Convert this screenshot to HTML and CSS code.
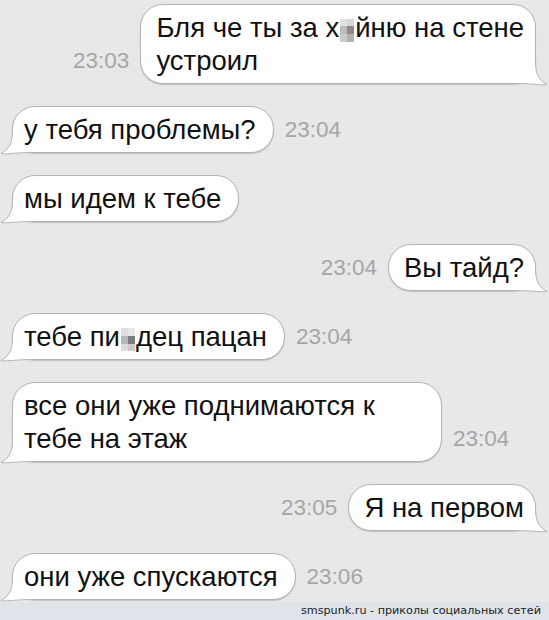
FILE: index.html
```html
<!DOCTYPE html>
<html lang="ru">
<head>
    <meta charset="UTF-8">
    <meta name="viewport" content="width=device-width, initial-scale=1.0">
    <title>Сообщения</title>
    <link rel="stylesheet" href="styles.css">
</head>
<body>
    <main class="chat">
        <div class="row out">
            <span class="time">23:03</span>
            <div class="bubble">Бля че ты за х<span class="blur blur-a"></span>йню на стене<br>устроил<svg class="tail" viewBox="0 0 35 26"><path class="tail-fill" d="M22.5 0 C22.5 12 24 19 34 24.5 C28 25.5 20 23.5 0 23.5 L0 0 Z"/><path class="tail-line" d="M22.5 0 C22.5 12 24 19 34 24.5 C28 25.5 20 23.5 0 23.5"/></svg></div>
        </div>
        <div class="row in">
            <div class="bubble">у тебя проблемы?<svg class="tail" viewBox="0 0 35 26"><path class="tail-fill" d="M22.5 0 C22.5 12 24 19 34 24.5 C28 25.5 20 23.5 0 23.5 L0 0 Z"/><path class="tail-line" d="M22.5 0 C22.5 12 24 19 34 24.5 C28 25.5 20 23.5 0 23.5"/></svg></div>
            <span class="time">23:04</span>
        </div>
        <div class="row in">
            <div class="bubble">мы идем к тебе<svg class="tail" viewBox="0 0 35 26"><path class="tail-fill" d="M22.5 0 C22.5 12 24 19 34 24.5 C28 25.5 20 23.5 0 23.5 L0 0 Z"/><path class="tail-line" d="M22.5 0 C22.5 12 24 19 34 24.5 C28 25.5 20 23.5 0 23.5"/></svg></div>
        </div>
        <div class="row out">
            <span class="time">23:04</span>
            <div class="bubble">Вы тайд?<svg class="tail" viewBox="0 0 35 26"><path class="tail-fill" d="M22.5 0 C22.5 12 24 19 34 24.5 C28 25.5 20 23.5 0 23.5 L0 0 Z"/><path class="tail-line" d="M22.5 0 C22.5 12 24 19 34 24.5 C28 25.5 20 23.5 0 23.5"/></svg></div>
        </div>
        <div class="row in">
            <div class="bubble">тебе пи<span class="blur blur-b"></span>дец пацан<svg class="tail" viewBox="0 0 35 26"><path class="tail-fill" d="M22.5 0 C22.5 12 24 19 34 24.5 C28 25.5 20 23.5 0 23.5 L0 0 Z"/><path class="tail-line" d="M22.5 0 C22.5 12 24 19 34 24.5 C28 25.5 20 23.5 0 23.5"/></svg></div>
            <span class="time">23:04</span>
        </div>
        <div class="row in">
            <div class="bubble wide">все они уже поднимаются к<br>тебе на этаж<svg class="tail" viewBox="0 0 35 26"><path class="tail-fill" d="M22.5 0 C22.5 12 24 19 34 24.5 C28 25.5 20 23.5 0 23.5 L0 0 Z"/><path class="tail-line" d="M22.5 0 C22.5 12 24 19 34 24.5 C28 25.5 20 23.5 0 23.5"/></svg></div>
            <span class="time">23:04</span>
        </div>
        <div class="row out">
            <span class="time">23:05</span>
            <div class="bubble">Я на первом<svg class="tail" viewBox="0 0 35 26"><path class="tail-fill" d="M22.5 0 C22.5 12 24 19 34 24.5 C28 25.5 20 23.5 0 23.5 L0 0 Z"/><path class="tail-line" d="M22.5 0 C22.5 12 24 19 34 24.5 C28 25.5 20 23.5 0 23.5"/></svg></div>
        </div>
        <div class="row in">
            <div class="bubble">они уже спускаются<svg class="tail" viewBox="0 0 35 26"><path class="tail-fill" d="M22.5 0 C22.5 12 24 19 34 24.5 C28 25.5 20 23.5 0 23.5 L0 0 Z"/><path class="tail-line" d="M22.5 0 C22.5 12 24 19 34 24.5 C28 25.5 20 23.5 0 23.5"/></svg></div>
            <span class="time">23:06</span>
        </div>
    </main>
    <footer class="credit">smspunk.ru - приколы социальных сетей</footer>
</body>
</html>
```

FILE: styles.css
```css
/* Chat screenshot */
body {
    margin: 0;
    height: 620px;
    overflow: hidden;
    display: flex;
    flex-direction: column;
    font-family: "Liberation Sans", Arial, sans-serif;
    background-color: #e8e8e8;
    background-image: repeating-linear-gradient(0deg, #e9e9e9 0 2px, #e5e5e5 2px 3px);
}
.chat {
    flex: 1;
    min-height: 0;
    overflow: hidden;
    display: flex;
    flex-direction: column;
    gap: 22px;
    padding: 4px 13px 0 12px;
}
.row {
    display: flex;
    align-items: flex-end;
    gap: 11px;
}
.row.out {
    justify-content: flex-end;
}
.bubble {
    position: relative;
    z-index: 0;
    background-color: #fff;
    border: 1px solid #b3b3b3;
    border-radius: 23px;
    box-shadow: 0 1px 1px rgba(0,0,0,0.18);
    color: #111;
    font-size: 27.5px;
    line-height: 33px;
    white-space: nowrap;
}
.in .bubble {
    padding: 6px 17px 6px 11px;
}
.out .bubble {
    padding: 6px 11px 6px 15px;
}
.bubble.wide {
    box-sizing: border-box;
    width: 430px;
}
.tail {
    position: absolute;
    z-index: -1;
    bottom: -3px;
    width: 35px;
    height: 26px;
    overflow: visible;
}
.out .tail {
    right: -13px;
}
.in .tail {
    left: -13px;
    transform: scaleX(-1);
}
.tail-fill {
    fill: #fff;
}
.tail-line {
    fill: none;
    stroke: #b3b3b3;
    stroke-width: 1;
}
.time {
    color: #a6a6a6;
    font-size: 22.5px;
    line-height: 33px;
    padding-bottom: 7px;
}
.blur {
    display: inline-block;
    width: 14px;
    height: 23px;
    vertical-align: -5px;
    margin: 0 1px;
}
.blur-a {
    background:
        linear-gradient(#e2e2e2, #e2e2e2) 0 0 / 7px 7px no-repeat,
        linear-gradient(#d6d6d6, #d6d6d6) 7px 0 / 7px 7px no-repeat,
        linear-gradient(#bcbcbc, #bcbcbc) 0 7px / 7px 8px no-repeat,
        linear-gradient(#8c8c8c, #8c8c8c) 7px 7px / 7px 8px no-repeat,
        linear-gradient(#cacaca, #cacaca) 0 15px / 7px 8px no-repeat,
        linear-gradient(#b2b2b2, #b2b2b2) 7px 15px / 7px 8px no-repeat;
}
.blur-b {
    background:
        linear-gradient(#dedede, #dedede) 0 0 / 7px 8px no-repeat,
        linear-gradient(#e8e8e8, #e8e8e8) 7px 0 / 7px 8px no-repeat,
        linear-gradient(#b8b8b8, #b8b8b8) 0 8px / 7px 8px no-repeat,
        linear-gradient(#7c7c7c, #7c7c7c) 7px 8px / 7px 8px no-repeat,
        linear-gradient(#dcdcdc, #dcdcdc) 0 16px / 7px 7px no-repeat,
        linear-gradient(#cbcbcb, #cbcbcb) 7px 16px / 7px 7px no-repeat;
}
.credit {
    flex-shrink: 0;
    height: 18px;
    background-color: #dfe4ea;
    color: #222;
    font-family: "DejaVu Sans", sans-serif;
    font-size: 11.2px;
    line-height: 18px;
    text-align: right;
    padding-right: 8px;
}
```
